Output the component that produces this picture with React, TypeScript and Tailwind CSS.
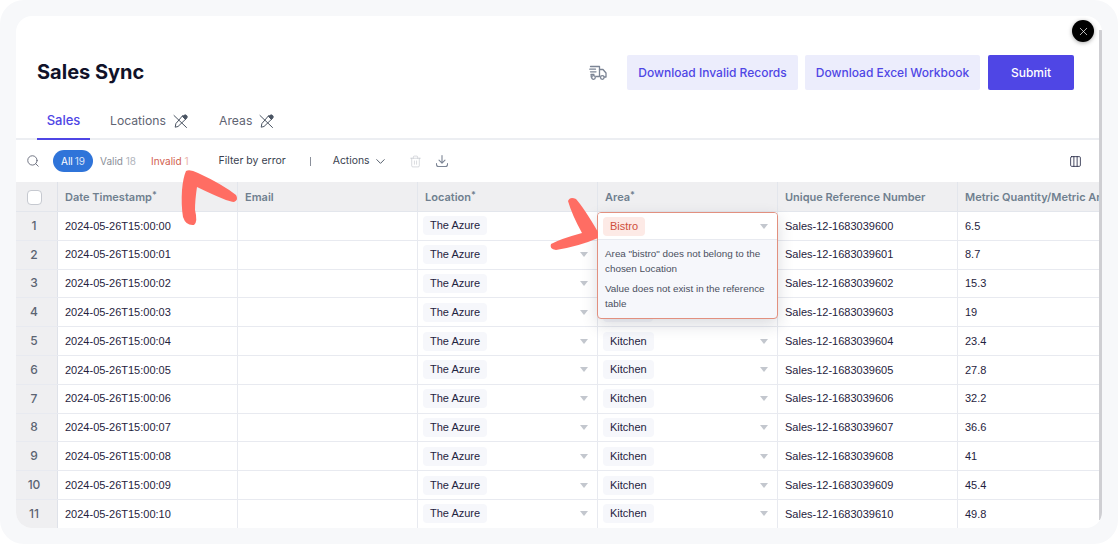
import { ChevronDown, Columns3, Search, Trash2, X } from "lucide-react";

const cols = ["w-[180px]", "w-[180px]", "w-[180px]", "w-[180px]", "w-[180px]"];

function CrossedPin() {
  return (
    <svg width="15" height="15" viewBox="0 0 15 15" fill="none" stroke="#4b5563" strokeWidth="1" strokeLinecap="round" strokeLinejoin="round">
      <path d="M1 1.5 L13.5 13.5" />
      <path d="M10 1.8 L13 4.8 L5 12.5 L2.2 13.2 L2.8 10 Z" />
      <path d="M10.8 1.5 a1.8 1.8 0 0 1 2.8 2.8 L12.5 5.5 L9.6 2.6 Z" fill="#4b5563" />
    </svg>
  );
}

function TruckIcon() {
  return (
    <svg width="18" height="16" viewBox="0 0 18 16" fill="none" stroke="#7b8494" strokeWidth="1.3" strokeLinecap="round" strokeLinejoin="round">
      <path d="M1.5 1.5 H10.5 V11.5 H7" />
      <path d="M10.5 4.5 H14 L17 8 V12 H15.5" />
      <path d="M0.8 4.2 H6.5 M1.5 6.8 H7 M2 9.3 H5" />
      <circle cx="4.5" cy="12.5" r="1.8" />
      <circle cx="13.3" cy="12.5" r="1.8" />
      <path d="M2.2 10 V12" />
    </svg>
  );
}

function DownloadIcon() {
  return (
    <svg width="14" height="14" viewBox="0 0 14 14" fill="none" stroke="#7b8494" strokeWidth="1.1" strokeLinecap="round" strokeLinejoin="round">
      <path d="M7 1.5 V9 M4 6.2 L7 9.2 L10 6.2" />
      <path d="M1.5 9.5 V10.5 A2 2 0 0 0 3.5 12.5 H10.5 A2 2 0 0 0 12.5 10.5 V9.5" />
    </svg>
  );
}

function Caret() {
  return <span className="ml-auto h-0 w-0 border-x-[4px] border-t-[5px] border-x-transparent border-t-[#c3c7ce]" />;
}

function Head({ label, star, w, border = true }: { label: string; star?: boolean; w: string; border?: boolean }) {
  return (
    <div className={`${w} flex h-full shrink-0 items-center whitespace-nowrap pl-[7px] pt-[1px] text-[11px] font-semibold text-[#6f7f8f] ${border ? "border-r border-[#e3e6ec]" : ""}`}>
      {label}
      {star && <span className="-translate-y-[2px] text-[9px]">*</span>}
    </div>
  );
}

function Row({ n, ts, urn, metric, area, hideArea, blankArea }: { n: number; ts: string; urn: string; metric: string; area: string; hideArea?: boolean; blankArea?: boolean }) {
  return (
    <div className="flex h-[28.8px] shrink-0 border-b border-[#e8eaf0] text-[11px] text-[#1f2340]" style={{ fontFamily: "'Liberation Sans', Arial, sans-serif" }}>
      <div className="flex w-[42px] shrink-0 items-center justify-center border-r border-[#dfe2e9] bg-[#efeff1] pr-[5px] text-[12px] font-medium text-[#5b6472]" style={{ fontFamily: "Inter, sans-serif" }}>{n}</div>
      <div className={`${cols[0]} flex shrink-0 items-center border-r border-[#e8eaf0] pl-[7px]`}>{ts}</div>
      <div className={`${cols[1]} shrink-0 border-r border-[#e8eaf0]`} />
      <div className={`${cols[2]} flex shrink-0 items-center border-r border-[#e8eaf0] pl-[5px] pr-[9px]`}>
        <span className="rounded-[4px] bg-[#f6f7fb] px-[7px] py-[2px] leading-[15px]">The Azure</span>
        <Caret />
      </div>
      <div className={`${cols[3]} flex shrink-0 items-center border-r border-[#e8eaf0] pl-[5px] pr-[9px]`}>
        {!hideArea && (
          <>
            {blankArea ? (
              <span className="h-[19px] w-[50px] rounded-[4px] bg-[#f6f7fb]" />
            ) : (
              <span className="rounded-[4px] bg-[#f6f7fb] px-[7px] py-[2px] leading-[15px]">{area}</span>
            )}
            <Caret />
          </>
        )}
      </div>
      <div className={`${cols[4]} flex shrink-0 items-center border-r border-[#e8eaf0] pl-[7px]`}>{urn}</div>
      <div className="flex flex-1 items-center pl-[7px]">{metric}</div>
    </div>
  );
}

const metrics = ["6.5", "8.7", "15.3", "19", "23.4", "27.8", "32.2", "36.6", "41", "45.4", "49.8"];

export default function App() {
  return (
    <div className="h-[544px] w-[1118px] overflow-hidden bg-white" style={{ fontFamily: "Inter, 'Liberation Sans', sans-serif" }}>
      <div className="relative h-full w-full rounded-[24px] bg-[#f7f8fa] p-4">
        <div className="relative flex h-full flex-col overflow-hidden rounded-[16px] bg-white">
          <div className="flex h-[74px] shrink-0 items-end justify-between pl-[21px] pr-[28px]">
            <h1 className="mb-[4px] text-[20px] font-bold leading-[28px] text-[#101229]">Sales Sync</h1>
            <div className="flex items-center">
              <span className="mr-[20px] flex"><TruckIcon /></span>
              <button className="mr-[7px] h-[35px] w-[171px] rounded-[2px] bg-[#ecedfc] text-[12px] font-medium text-[#4f46e5]">Download Invalid Records</button>
              <button className="mr-[8px] h-[35px] w-[175px] rounded-[2px] bg-[#ecedfc] text-[12px] font-medium text-[#4f46e5]">Download Excel Workbook</button>
              <button className="h-[35px] w-[86px] rounded-[2px] bg-[#4f46e5] text-[12px] font-medium text-white">Submit</button>
            </div>
          </div>

          <div className="mt-[13px] flex h-[37px] shrink-0 border-b-2 border-[#eceef2] pl-[21px] pt-[1px] text-[12.2px] text-[#5f6473]">
            <div className="-mb-[2px] flex w-[53px] items-center justify-center border-b-2 border-[#4f46e5] text-[13px] font-medium text-[#4f46e5]">Sales</div>
            <div className="ml-[20px] flex items-center gap-[7px]">Locations <CrossedPin /></div>
            <div className="ml-[31px] flex items-center gap-[7px]">Areas <CrossedPin /></div>
          </div>

          <div className="flex h-[42px] shrink-0 items-center pl-[10px] pr-[20px] text-[10px]">
            <Search size={14} strokeWidth={1.5} className="text-[#5f6473]" />
            <span className="ml-[13px] flex h-[22px] w-[40px] items-center justify-center rounded-full bg-[#2f74d9] text-white">All <span className="ml-[2px] opacity-80">19</span></span>
            <span className="ml-[7px] text-[#8b8f99]">Valid <span className="text-[#b0b4bc]">18</span></span>
            <span className="ml-[15px] text-[#d2604e]">Invalid <span className="text-[#eab5ab]">1</span></span>
            <span className="ml-[30px] text-[10.5px] text-[#3a3f50]">Filter by error</span>
            <span className="ml-[24px] h-[9px] w-px bg-[#8a8f9a]" />
            <span className="ml-[22px] text-[10.4px] text-[#3a3f50]">Actions</span>
            <ChevronDown size={15} strokeWidth={1.5} className="ml-[3px] text-[#4b5563]" />
            <Trash2 size={13} strokeWidth={1} className="ml-[21px] text-[#b8bcc4]" />
            <span className="ml-[13px] flex"><DownloadIcon /></span>
            <Columns3 size={13} strokeWidth={1.5} className="ml-auto text-[#1f2340]" />
          </div>

          <div className="flex h-[30px] shrink-0 border-b border-[#e3e6ec] bg-[#efeff1]">
            <div className="flex w-[42px] shrink-0 items-center justify-center border-r border-[#dfe2e9] pr-[4px] pt-[1px]">
              <span className="h-[15px] w-[15px] rounded-[4px] border border-[#c6c9d0] bg-white" />
            </div>
            <Head label="Date Timestamp" star w={cols[0]} />
            <Head label="Email" w={cols[1]} />
            <Head label="Location" star w={cols[2]} />
            <Head label="Area" star w={cols[3]} />
            <Head label="Unique Reference Number" w={cols[4]} />
            <Head label="Metric Quantity/Metric Amount" w="flex-1 overflow-hidden" border={false} />
          </div>

          {metrics.map((m, i) => (
            <Row
              key={i}
              n={i + 1}
              ts={`2024-05-26T15:00:${String(i).padStart(2, "0")}`}
              urn={`Sales-12-${1683039600 + i}`}
              metric={m}
              area="Kitchen"
              hideArea={i < 3}
              blankArea={i === 3}
            />
          ))}

          <div className="absolute left-[581px] top-[196px] w-[181px] overflow-hidden rounded-[4px] border border-[#e2907f] bg-[#f6f7fb] shadow-[0_6px_16px_rgba(30,35,60,0.16)]" style={{ fontFamily: "'Liberation Sans', Arial, sans-serif" }}>
            <div className="flex h-[27px] items-center border-b border-[#e8eaf0] bg-white pl-[5px] pr-[9px]">
              <span className="rounded-[4px] bg-[#fdeae6] px-[7px] py-[2px] text-[11px] leading-[15px] text-[#cf4f3c]">Bistro</span>
              <Caret />
            </div>
            <div className="px-[7px] pb-[7px] pt-[7px] text-[9.9px] leading-[14.5px] text-[#4a4f5e]">
              <p>Area "bistro" does not belong to the chosen Location</p>
              <p className="mt-[6px]">Value does not exist in the reference table</p>
            </div>
          </div>

          <div className="absolute bottom-[8px] right-0 top-[14px] w-[3px] bg-[#cfcfd3]" />
        </div>

        <button className="absolute left-[1072px] top-[20px] flex h-[22px] w-[22px] items-center justify-center rounded-full bg-black text-white shadow-[0_1px_4px_rgba(0,0,0,0.35)]">
          <X size={13} strokeWidth={1.3} />
        </button>

        <svg className="pointer-events-none absolute left-0 top-0" width="1118" height="544" viewBox="0 0 1118 544" fill="#ff6d63">
          <path d="M186 171 Q190 169 198 173 Q222 184 236 195 Q239 200 234 202 Q228 202 197 187 Q195 200 195 210 Q198 222 194 225 Q186 226 183 217 Q181 205 182 190 Q183 178 186 171 Z" />
          <path d="M568 201 Q570 196 576 199 Q584 208 598 232 L598 238 Q580 246 556 250 Q549 249 551 244 Q560 239 582 233 Q572 215 568 201 Z" />
        </svg>
      </div>
    </div>
  );
}
